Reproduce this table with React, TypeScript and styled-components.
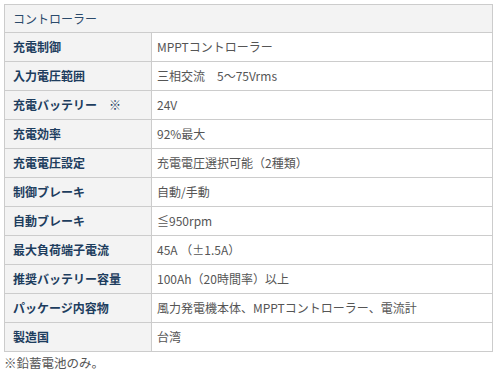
import React from "react";
import styled, { createGlobalStyle } from "styled-components";

const GlobalStyle = createGlobalStyle`
  body {
    margin: 0;
    background: #fff;
    font-family: "Noto Sans CJK JP", "Noto Sans", sans-serif;
  }
`;

const Wrapper = styled.div`
  padding: 4px 7px 0 4px;
`;

const SpecTable = styled.table`
  width: 489px;
  border-collapse: collapse;
  font-size: 12px;
  line-height: 16px;
`;

const HeadCell = styled.th`
  height: 28px;
  box-sizing: border-box;
  padding: 0 8px;
  text-align: left;
  font-weight: normal;
  color: #2b4a6b;
  background: #f3f3f3;
  border: 1px solid #cccccc;
`;

const LabelCell = styled.th`
  width: 147px;
  height: 29px;
  box-sizing: border-box;
  padding: 0 8px;
  text-align: left;
  font-weight: bold;
  color: #1d3d5e;
  background: #f3f3f3;
  border: 1px solid #cccccc;
`;

const ValueCell = styled.td`
  height: 29px;
  box-sizing: border-box;
  padding: 0 5px;
  color: #555;
  border: 1px solid #cccccc;
`;

const Note = styled.p`
  margin: 1px 0 0;
  font-size: 12.5px;
  color: #555;
`;

const specs: [string, string][] = [
  ["充電制御", "MPPTコントローラー"],
  ["入力電圧範囲", "三相交流　5～75Vrms"],
  ["充電バッテリー　※", "24V"],
  ["充電効率", "92%最大"],
  ["充電電圧設定", "充電電圧選択可能（2種類）"],
  ["制御ブレーキ", "自動/手動"],
  ["自動ブレーキ", "≦950rpm"],
  ["最大負荷端子電流", "45A （±1.5A）"],
  ["推奨バッテリー容量", "100Ah（20時間率）以上"],
  ["パッケージ内容物", "風力発電機本体、MPPTコントローラー、電流計"],
  ["製造国", "台湾"],
];

export default function App() {
  return (
    <Wrapper>
      <GlobalStyle />
      <SpecTable>
        <tbody>
          <tr>
            <HeadCell colSpan={2}>コントローラー</HeadCell>
          </tr>
          {specs.map(([label, value]) => (
            <tr key={label}>
              <LabelCell>{label}</LabelCell>
              <ValueCell>{value}</ValueCell>
            </tr>
          ))}
        </tbody>
      </SpecTable>
      <Note>※鉛蓄電池のみ。</Note>
    </Wrapper>
  );
}
